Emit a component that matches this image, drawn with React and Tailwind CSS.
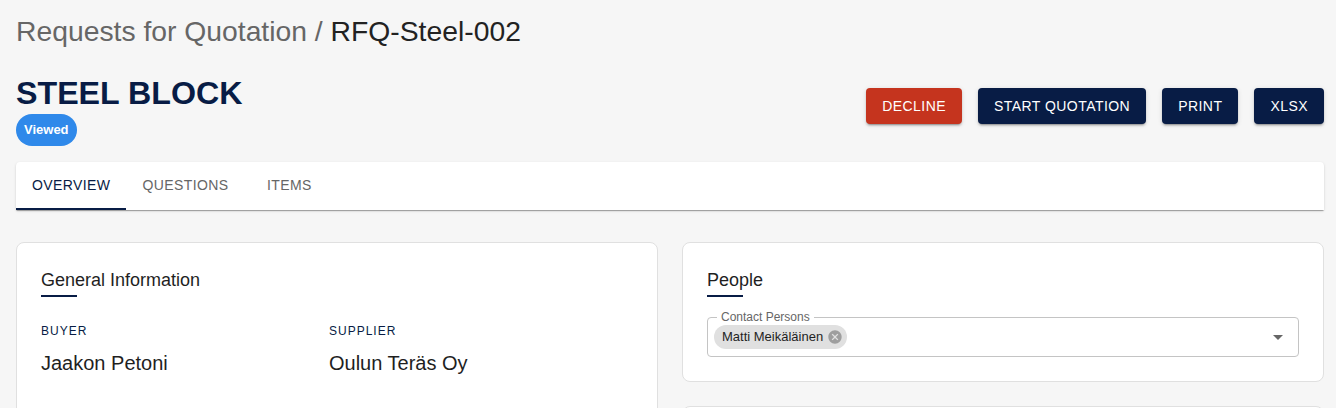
import { useState } from 'react';

const NAVY = 'bg-[#081c45]';
const btnShadow =
  'shadow-[0_3px_1px_-2px_rgba(0,0,0,0.2),0_2px_2px_0_rgba(0,0,0,0.14),0_1px_5px_0_rgba(0,0,0,0.12)]';

function ActionButton({ children, className }) {
  return (
    <button
      className={`h-9 px-4 rounded text-[14px] leading-none tracking-[0.45px] text-white uppercase ${btnShadow} ${className}`}
    >
      {children}
    </button>
  );
}

function SectionTitle({ children }) {
  return (
    <div>
      <h2 className="text-[18px] leading-[27px] text-[#1f1f1f]">{children}</h2>
      <div className="mt-[1px] h-[2px] w-9 bg-[#081c45]" />
    </div>
  );
}

function Field({ label, value }) {
  return (
    <div className="w-[288px]">
      <p className="text-[12px] leading-[20px] tracking-[1px] uppercase text-[#081c45]">{label}</p>
      <p className="mt-2 text-[20px] leading-[28px] text-[#1f1f1f]">{value}</p>
    </div>
  );
}

function ContactField() {
  return (
    <div className="relative mt-5 h-[40px] rounded border border-[#c4c4c4] flex items-center pl-[6px] pr-[8px]">
      <span className="absolute -top-[9px] left-[9px] px-[4px] bg-white text-[12px] leading-[16px] text-[#666]">
        Contact Persons
      </span>
      <span className="flex items-center h-6 rounded-full bg-[#e0e0e0] pl-2 pr-[4px] text-[13px] text-[#1f1f1f]">
        Matti Meikäläinen
        <svg viewBox="0 0 24 24" className="ml-[4px] w-4 h-4" fill="#9e9e9e">
          <path d="M12 2C6.47 2 2 6.47 2 12s4.47 10 10 10 10-4.47 10-10S17.53 2 12 2zm5 13.59L15.59 17 12 13.41 8.41 17 7 15.59 10.59 12 7 8.41 8.41 7 12 10.59 15.59 7 17 8.41 13.41 12 17 15.59z" />
        </svg>
      </span>
      <svg viewBox="0 0 24 24" className="ml-auto w-6 h-6" fill="#666">
        <path d="M7 10l5 5 5-5z" />
      </svg>
    </div>
  );
}

export default function App() {
  const [tab, setTab] = useState('overview');
  const tabs = [
    { key: 'overview', label: 'Overview' },
    { key: 'questions', label: 'Questions' },
    { key: 'items', label: 'Items' },
  ];

  return (
    <div className="min-h-screen bg-[#f6f6f6] pl-4 pr-3 pt-[14px] pb-10 font-['Liberation_Sans',Arial,sans-serif]">
      <h1 className="text-[28.3px] leading-[34px] text-[#666]">
        Requests for Quotation / <span className="text-[#222]">RFQ-Steel-002</span>
      </h1>

      <div className="mt-[25px] flex items-start justify-between">
        <div>
          <h2 className="text-[32.2px] leading-[40px] font-bold text-[#081c45]">STEEL BLOCK</h2>
          <span className="mt-[1px] inline-flex items-center h-8 px-2 rounded-full bg-[#2f89ea] text-white text-[13px] font-bold">
            Viewed
          </span>
        </div>
        <div className="mt-[15px] flex gap-4">
          <ActionButton className="bg-[#c5341e]">Decline</ActionButton>
          <ActionButton className={NAVY}>Start Quotation</ActionButton>
          <ActionButton className={NAVY}>Print</ActionButton>
          <ActionButton className={NAVY}>XLSX</ActionButton>
        </div>
      </div>

      <div className="mt-4 h-12 bg-white flex rounded-t shadow-[0_2px_1px_-1px_rgba(0,0,0,0.2),0_1px_1px_0_rgba(0,0,0,0.14),0_1px_3px_0_rgba(0,0,0,0.12)]">
        {tabs.map((t) => (
          <button
            key={t.key}
            onClick={() => setTab(t.key)}
            className={`relative min-w-[90px] px-4 pb-[2px] text-[14px] tracking-[0.4px] uppercase ${
              tab === t.key ? 'text-[#081c45]' : 'text-[#666]'
            }`}
          >
            {t.label}
            {tab === t.key && <span className="absolute left-0 right-0 bottom-0 h-[2px] bg-[#081c45]" />}
          </button>
        ))}
      </div>

      <div className="mt-8 grid grid-cols-2 gap-6 items-start">
        <div className="bg-white rounded-lg border border-[#e0e0e0] p-6 min-h-[260px]">
          <SectionTitle>General Information</SectionTitle>
          <div className="mt-6 flex">
            <Field label="Buyer" value="Jaakon Petoni" />
            <Field label="Supplier" value="Oulun Teräs Oy" />
          </div>
        </div>

        <div className="flex flex-col gap-6">
          <div className="bg-white rounded-lg border border-[#e0e0e0] p-6">
            <SectionTitle>People</SectionTitle>
            <ContactField />
          </div>
          <div className="bg-white rounded-lg border border-[#e0e0e0] h-[120px]" />
        </div>
      </div>
    </div>
  );
}
